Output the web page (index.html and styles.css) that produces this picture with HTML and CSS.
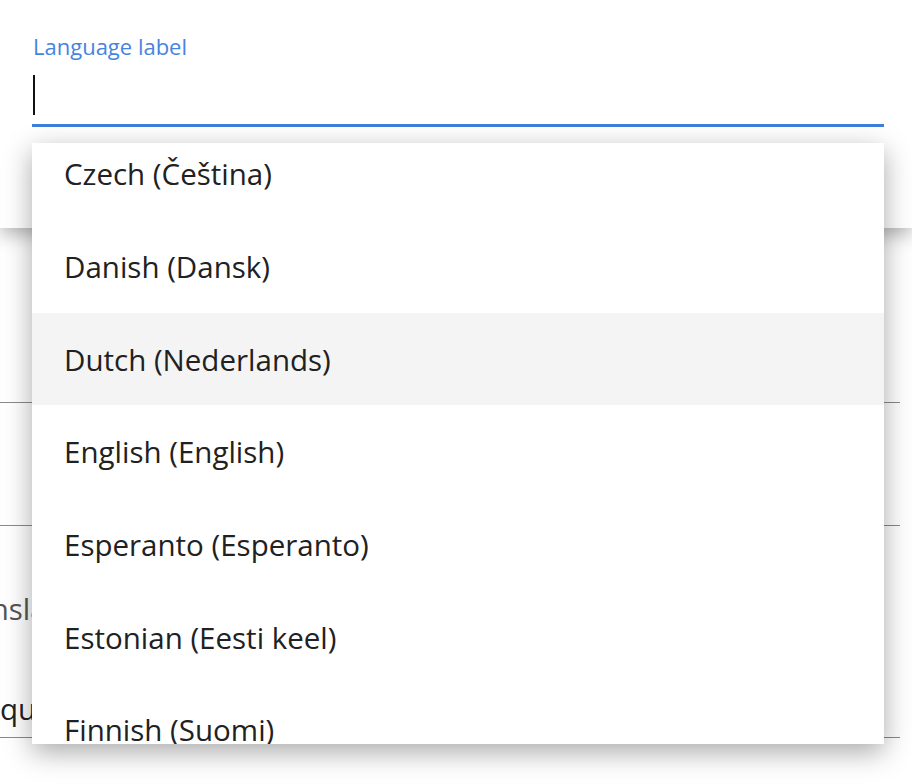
FILE: index.html
```html
<!DOCTYPE html>
<html lang="en">
<head>
    <meta charset="UTF-8">
    <meta name="viewport" content="width=device-width, initial-scale=1.0">
    <title>Language</title>
    <link rel="stylesheet" href="styles.css">
</head>
<body>
    <div class="header">
        <div class="field">
            <label class="field-label" for="language">Language label</label>
            <div class="field-input">
                <span class="caret"></span>
            </div>
        </div>
    </div>

    <div class="page">
        <div class="row row-first"></div>
        <div class="row row-second"></div>
        <div class="row row-third">
            <div class="row-label"><span class="clip">Translation</span></div>
            <div class="row-value"><span class="clip-q">que</span></div>
        </div>
    </div>

    <!-- Lista desplegable -->
    <div class="dropdown" role="listbox">
        <ul class="dropdown-list">
            <li class="option">Czech (Čeština)</li>
            <li class="option">Danish (Dansk)</li>
            <li class="option option-active">Dutch (Nederlands)</li>
            <li class="option">English (English)</li>
            <li class="option">Esperanto (Esperanto)</li>
            <li class="option">Estonian (Eesti keel)</li>
            <li class="option">Finnish (Suomi)</li>
        </ul>
    </div>
</body>
</html>
```

FILE: styles.css
```css
body {
    margin: 0;
    height: 784px;
    overflow: hidden;
    background: #ffffff;
    font-family: 'Open Sans', 'Noto Sans', sans-serif;
    color: #212121;
    position: relative;
}

.header {
    position: relative;
    z-index: 1;
    height: 228px;
    background: #ffffff;
    box-shadow: 0 6px 18px rgba(0, 0, 0, 0.3);
}

.field {
    padding: 31px 28px 0 32px;
}

.field-label {
    display: block;
    font-size: 22px;
    line-height: 30px;
    color: #4683e0;
    padding-left: 1px;
}

.field-input {
    display: flex;
    align-items: flex-start;
    height: 64px;
    margin-top: 2px;
    padding: 12px 0 0 1px;
    border-bottom: 3px solid #3f7fdc;
    box-sizing: border-box;
}

.caret {
    width: 2px;
    height: 40px;
    background: #111111;
}

.page {
    padding-right: 12px;
}

.row {
    border-bottom: 1px solid #8a8a8a;
}

.row-first {
    height: 174px;
}

.row-second {
    height: 122px;
}

.row-third {
    height: 211px;
    font-size: 29.5px;
    color: #555555;
}

.row-label {
    padding-top: 63px;
    line-height: 40px;
    white-space: nowrap;
}

.clip {
    margin-left: -54px;
}

.row-value {
    padding-top: 60px;
    line-height: 40px;
    color: #222222;
}

.dropdown {
    position: absolute;
    top: 143px;
    left: 32px;
    width: 852px;
    height: 601px;
    z-index: 2;
    overflow: hidden;
    background: #ffffff;
    box-shadow: 0 8px 26px rgba(0, 0, 0, 0.34);
}

.dropdown-list {
    list-style: none;
    margin: -15.6px 0 0 0;
    padding: 0;
}

.option {
    height: 92.67px;
    display: flex;
    align-items: center;
    padding-left: 32px;
    font-size: 29.5px;
    color: #212121;
}

.option-active {
    background: #f4f4f4;
}
```
